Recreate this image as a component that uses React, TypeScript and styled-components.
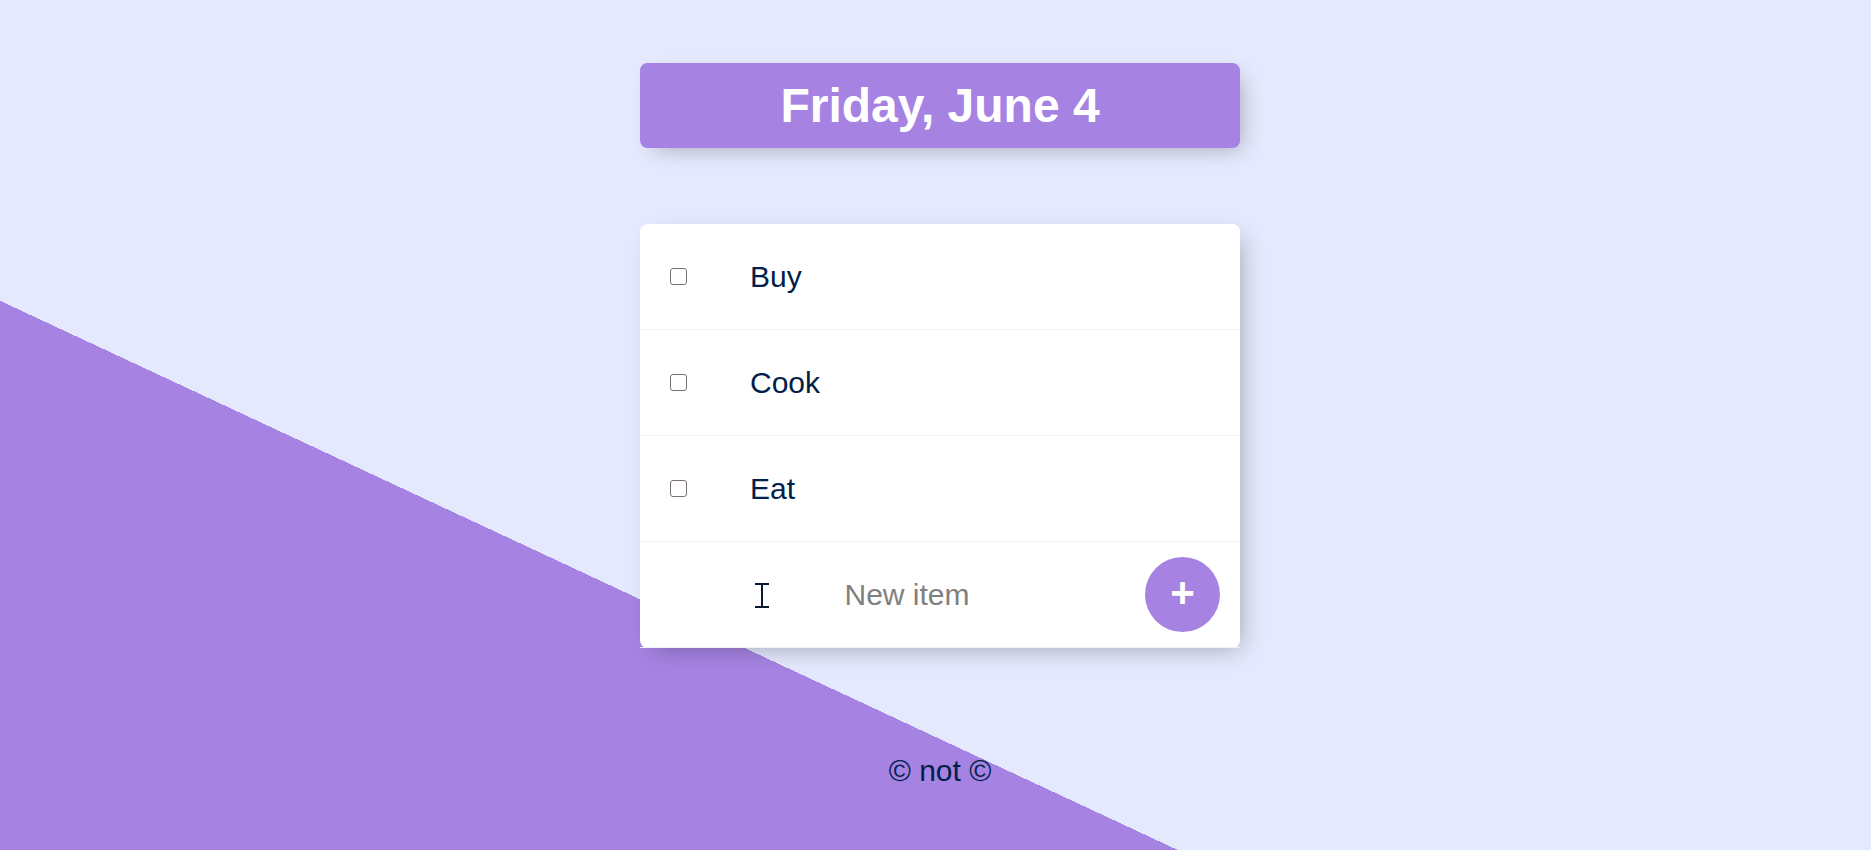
import React from "react";
import styled, { createGlobalStyle } from "styled-components";

const GlobalStyle = createGlobalStyle`
  html, body { margin: 0; padding: 0; }
  body {
    font-family: "Liberation Sans", Arial, Helvetica, sans-serif;
    background: #E4E9FD;
  }
`;

const Page = styled.div`
  min-height: 100vh;
  box-sizing: border-box;
  overflow: hidden;
  background-color: #E4E9FD;
  background-image: linear-gradient(25deg, #A683E3 50%, #E4E9FD 50%);
  background-size: 100% 1474px;
  background-repeat: no-repeat;
  padding: 63px 0 0 9px;
  display: flex;
  flex-direction: column;
  align-items: center;
`;

const Box = styled.div<{ $gap?: number }>`
  width: 600px;
  margin-top: ${(p) => p.$gap ?? 0}px;
  background: #ffffff;
  border-radius: 7.5px;
  box-shadow: 7.5px 7.5px 22.5px -7.5px rgba(0, 0, 0, 0.3);
  position: relative;
`;

const Heading = styled(Box)`
  background: #A683E3;
  text-align: center;
`;

const Title = styled.h1`
  margin: 0;
  padding: 15px;
  font-size: 48px;
  font-weight: 700;
  color: #ffffff;
  line-height: normal;
`;

const Item = styled.div`
  min-height: 105px;
  display: flex;
  align-items: center;
  border-bottom: 1px solid #F1F1F1;
  &:last-child { border-bottom: 0; }
`;

const Check = styled.input`
  appearance: none;
  -webkit-appearance: none;
  width: 17px;
  height: 17px;
  margin: 0 0 0 30px;
  border: 1.5px solid #7a7076;
  border-radius: 3px;
  box-sizing: border-box;
  background: #fff;
  flex-shrink: 0;
`;

const Label = styled.p`
  margin: 0 0 0 63px;
  padding: 0;
  font-size: 30px;
  color: #00204a;
  line-height: normal;
`;

const Form = styled.form`
  display: flex;
  align-items: center;
  width: 100%;
  padding: 0 20px 0 32px;
  box-sizing: border-box;
  gap: 3px;
`;

const TextInput = styled.input`
  flex: 1;
  min-width: 0;
  height: 90px;
  border: none;
  outline: none;
  text-align: center;
  font-family: "Liberation Sans", Arial, sans-serif;
  font-size: 30px;
  color: #00204a;
  background: transparent;
  padding: 0;
  &::placeholder { color: grey; opacity: 1; }
`;

const AddButton = styled.button`
  width: 75px;
  height: 75px;
  flex-shrink: 0;
  border-radius: 50%;
  border: 0;
  background: #A683E3;
  color: #ffffff;
  font-family: "Liberation Sans", Arial, sans-serif;
  font-size: 42px;
  font-weight: 700;
  line-height: 1;
  padding: 0 0 4px 0;
  display: flex;
  align-items: center;
  justify-content: center;
`;

const Cursor = styled.svg`
  position: absolute;
  left: 115px;
  top: 359px;
  pointer-events: none;
`;

const Footer = styled.footer`
  margin-top: 106px;
  font-size: 30px;
  color: #00204a;
  text-align: center;
  line-height: normal;
`;

const items = ["Buy", "Cook", "Eat"];

export default function App() {
  return (
    <>
      <GlobalStyle />
      <Page>
        <Heading>
          <Title>Friday, June 4</Title>
        </Heading>
        <Box $gap={76}>
          {items.map((t) => (
            <Item key={t}>
              <Check type="checkbox" />
              <Label>{t}</Label>
            </Item>
          ))}
          <Item>
            <Form onSubmit={(e) => e.preventDefault()}>
              <TextInput type="text" placeholder="New item" autoComplete="off" />
              <AddButton type="submit">+</AddButton>
            </Form>
          </Item>
          <Cursor width="14" height="25" viewBox="0 0 14 25">
            <rect x="0" y="0" width="14" height="2" fill="#0b1a33" />
            <rect x="6" y="1" width="2" height="23" fill="#0b1a33" />
            <rect x="0" y="23" width="14" height="2" fill="#0b1a33" />
          </Cursor>
        </Box>
        <Footer>© not ©</Footer>
      </Page>
    </>
  );
}
